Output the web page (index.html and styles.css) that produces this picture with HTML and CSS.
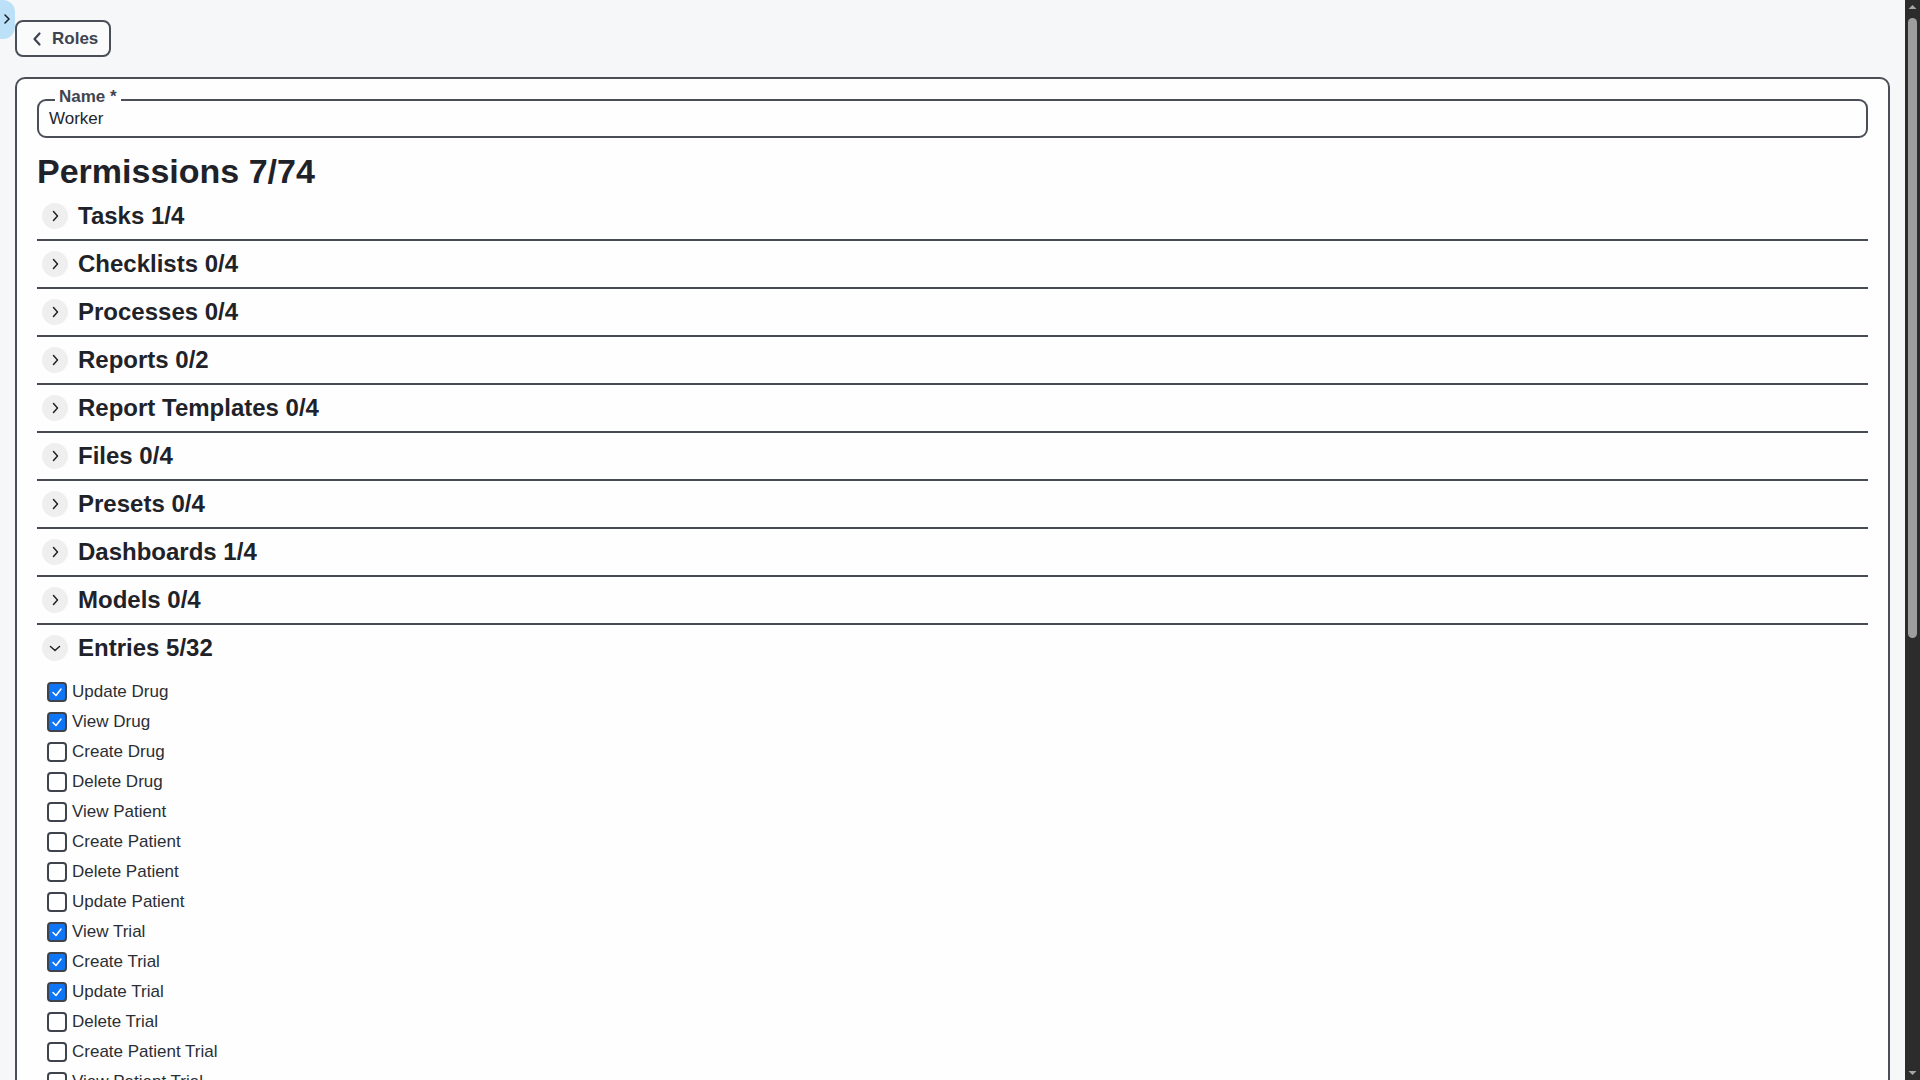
FILE: index.html
```html
<!DOCTYPE html>
<html lang="en">
<head>
<meta charset="utf-8">
<title>Role - Worker</title>
<link rel="stylesheet" href="styles.css">
</head>
<body>
<button class="sidebar-toggle" aria-label="Open sidebar">
  <svg width="8" height="12" viewBox="0 0 8 12"><polyline points="2,2 6,6 2,10" fill="none" stroke="#1f2329" stroke-width="1.6" stroke-linecap="round" stroke-linejoin="round"/></svg>
</button>
<div class="scrollbar" aria-hidden="true">
  <div class="sb-arrow sb-up"><svg width="15" height="15" viewBox="0 0 15 15"><polygon points="3.5,9 11.5,9 7.5,5" fill="#a6a6a6"/></svg></div>
  <div class="sb-track"><div class="sb-thumb"></div></div>
  <div class="sb-arrow sb-down"><svg width="15" height="15" viewBox="0 0 15 15"><polygon points="3.5,6 11.5,6 7.5,10" fill="#a6a6a6"/></svg></div>
</div>
<main class="page">
  <div class="top-bar">
    <button class="back-btn">
      <svg width="12" height="16" viewBox="0 0 12 16"><polyline points="8.5,2.5 3.5,8 8.5,13.5" fill="none" stroke="#3d4350" stroke-width="2.2" stroke-linecap="round" stroke-linejoin="round"/></svg>
      <span>Roles</span>
    </button>
  </div>
  <section class="card">
    <fieldset class="field">
      <legend>Name *</legend>
      <div class="field-value">Worker</div>
    </fieldset>
    <h1 class="title">Permissions 7/74</h1>
    <div class="groups">
      <div class="group"><div class="group-head"><span class="chev"><svg width="12" height="12" viewBox="0 0 12 12"><polyline points="4.5,1.5 8.5,6 4.5,10.5" fill="none" stroke="#1f2329" stroke-width="1.5" stroke-linecap="round" stroke-linejoin="round"/></svg></span><h2>Tasks 1/4</h2></div></div>
      <div class="group"><div class="group-head"><span class="chev"><svg width="12" height="12" viewBox="0 0 12 12"><polyline points="4.5,1.5 8.5,6 4.5,10.5" fill="none" stroke="#1f2329" stroke-width="1.5" stroke-linecap="round" stroke-linejoin="round"/></svg></span><h2>Checklists 0/4</h2></div></div>
      <div class="group"><div class="group-head"><span class="chev"><svg width="12" height="12" viewBox="0 0 12 12"><polyline points="4.5,1.5 8.5,6 4.5,10.5" fill="none" stroke="#1f2329" stroke-width="1.5" stroke-linecap="round" stroke-linejoin="round"/></svg></span><h2>Processes 0/4</h2></div></div>
      <div class="group"><div class="group-head"><span class="chev"><svg width="12" height="12" viewBox="0 0 12 12"><polyline points="4.5,1.5 8.5,6 4.5,10.5" fill="none" stroke="#1f2329" stroke-width="1.5" stroke-linecap="round" stroke-linejoin="round"/></svg></span><h2>Reports 0/2</h2></div></div>
      <div class="group"><div class="group-head"><span class="chev"><svg width="12" height="12" viewBox="0 0 12 12"><polyline points="4.5,1.5 8.5,6 4.5,10.5" fill="none" stroke="#1f2329" stroke-width="1.5" stroke-linecap="round" stroke-linejoin="round"/></svg></span><h2>Report Templates 0/4</h2></div></div>
      <div class="group"><div class="group-head"><span class="chev"><svg width="12" height="12" viewBox="0 0 12 12"><polyline points="4.5,1.5 8.5,6 4.5,10.5" fill="none" stroke="#1f2329" stroke-width="1.5" stroke-linecap="round" stroke-linejoin="round"/></svg></span><h2>Files 0/4</h2></div></div>
      <div class="group"><div class="group-head"><span class="chev"><svg width="12" height="12" viewBox="0 0 12 12"><polyline points="4.5,1.5 8.5,6 4.5,10.5" fill="none" stroke="#1f2329" stroke-width="1.5" stroke-linecap="round" stroke-linejoin="round"/></svg></span><h2>Presets 0/4</h2></div></div>
      <div class="group"><div class="group-head"><span class="chev"><svg width="12" height="12" viewBox="0 0 12 12"><polyline points="4.5,1.5 8.5,6 4.5,10.5" fill="none" stroke="#1f2329" stroke-width="1.5" stroke-linecap="round" stroke-linejoin="round"/></svg></span><h2>Dashboards 1/4</h2></div></div>
      <div class="group"><div class="group-head"><span class="chev"><svg width="12" height="12" viewBox="0 0 12 12"><polyline points="4.5,1.5 8.5,6 4.5,10.5" fill="none" stroke="#1f2329" stroke-width="1.5" stroke-linecap="round" stroke-linejoin="round"/></svg></span><h2>Models 0/4</h2></div></div>
      <div class="group open">
        <div class="group-head"><span class="chev"><svg width="12" height="12" viewBox="0 0 12 12"><polyline points="1.5,4.5 6,8.5 10.5,4.5" fill="none" stroke="#1f2329" stroke-width="1.5" stroke-linecap="round" stroke-linejoin="round"/></svg></span><h2>Entries 5/32</h2></div>
        <ul class="perm-list">
          <li><span class="box on"><svg width="16" height="16" viewBox="0 0 16 16"><polyline points="4,8.5 7,11.5 12,5" fill="none" stroke="#fff" stroke-width="1.5" stroke-linecap="round" stroke-linejoin="round"/></svg></span>Update Drug</li>
          <li><span class="box on"><svg width="16" height="16" viewBox="0 0 16 16"><polyline points="4,8.5 7,11.5 12,5" fill="none" stroke="#fff" stroke-width="1.5" stroke-linecap="round" stroke-linejoin="round"/></svg></span>View Drug</li>
          <li><span class="box"></span>Create Drug</li>
          <li><span class="box"></span>Delete Drug</li>
          <li><span class="box"></span>View Patient</li>
          <li><span class="box"></span>Create Patient</li>
          <li><span class="box"></span>Delete Patient</li>
          <li><span class="box"></span>Update Patient</li>
          <li><span class="box on"><svg width="16" height="16" viewBox="0 0 16 16"><polyline points="4,8.5 7,11.5 12,5" fill="none" stroke="#fff" stroke-width="1.5" stroke-linecap="round" stroke-linejoin="round"/></svg></span>View Trial</li>
          <li><span class="box on"><svg width="16" height="16" viewBox="0 0 16 16"><polyline points="4,8.5 7,11.5 12,5" fill="none" stroke="#fff" stroke-width="1.5" stroke-linecap="round" stroke-linejoin="round"/></svg></span>Create Trial</li>
          <li><span class="box on"><svg width="16" height="16" viewBox="0 0 16 16"><polyline points="4,8.5 7,11.5 12,5" fill="none" stroke="#fff" stroke-width="1.5" stroke-linecap="round" stroke-linejoin="round"/></svg></span>Update Trial</li>
          <li><span class="box"></span>Delete Trial</li>
          <li><span class="box"></span>Create Patient Trial</li>
          <li><span class="box"></span>View Patient Trial</li>
          <li><span class="box"></span>Update Patient Trial</li>
          <li><span class="box"></span>Delete Patient Trial</li>
          <li><span class="box"></span>View Site</li>
          <li><span class="box"></span>Create Site</li>
          <li><span class="box"></span>Update Site</li>
          <li><span class="box"></span>Delete Site</li>
          <li><span class="box"></span>View Sample</li>
          <li><span class="box"></span>Create Sample</li>
          <li><span class="box"></span>Update Sample</li>
          <li><span class="box"></span>Delete Sample</li>
          <li><span class="box"></span>View Visit</li>
          <li><span class="box"></span>Create Visit</li>
          <li><span class="box"></span>Update Visit</li>
          <li><span class="box"></span>Delete Visit</li>
          <li><span class="box"></span>View Adverse Event</li>
          <li><span class="box"></span>Create Adverse Event</li>
          <li><span class="box"></span>Update Adverse Event</li>
          <li><span class="box"></span>Delete Adverse Event</li>
        </ul>
      </div>
      <div class="group"><div class="group-head"><span class="chev"><svg width="12" height="12" viewBox="0 0 12 12"><polyline points="4.5,1.5 8.5,6 4.5,10.5" fill="none" stroke="#1f2329" stroke-width="1.5" stroke-linecap="round" stroke-linejoin="round"/></svg></span><h2>Users 0/4</h2></div></div>
      <div class="group"><div class="group-head"><span class="chev"><svg width="12" height="12" viewBox="0 0 12 12"><polyline points="4.5,1.5 8.5,6 4.5,10.5" fill="none" stroke="#1f2329" stroke-width="1.5" stroke-linecap="round" stroke-linejoin="round"/></svg></span><h2>Roles 0/4</h2></div></div>
    </div>
  </section>
</main>
</body>
</html>
```
FILE: styles.css
```css
* { box-sizing: border-box; }

html, body {
  margin: 0;
  padding: 0;
}

body {
  background: #f6f7f9;
  color: #22262c;
  font-family: "Liberation Sans", Arial, sans-serif;
  font-size: 17px;
}

/* browser scrollbar look-alike, overlaid on the right edge */
.scrollbar {
  position: fixed;
  top: 0;
  right: 0;
  width: 15px;
  height: 100vh;
  background: #2c2c2c;
  display: flex;
  flex-direction: column;
  z-index: 10;
}

.sb-arrow {
  height: 15px;
  flex-shrink: 0;
  display: flex;
}

.sb-track {
  flex: 1;
  padding: 3px 3px 0 3px;
}

.sb-thumb {
  height: 620px;
  width: 9px;
  border-radius: 5px;
  background: #9e9e9e;
}

.sidebar-toggle {
  position: fixed;
  top: 0;
  left: 0;
  width: 15px;
  height: 39px;
  padding: 0 0 2px 3px;
  border: none;
  border-radius: 0 12px 12px 0;
  background: #bde0f9;
  display: flex;
  align-items: center;
  justify-content: flex-start;
  cursor: pointer;
  z-index: 5;
}

.page {
  padding: 20px 30px 40px 15px;
}

.top-bar {
  display: flex;
}

.back-btn {
  display: flex;
  align-items: center;
  gap: 9px;
  height: 37px;
  width: 96px;
  padding: 0 0 0 14px;
  border: 2px solid #4a4f57;
  border-radius: 8px;
  background: #fbfbfc;
  color: #3d4350;
  font-family: inherit;
  font-size: 17px;
  font-weight: bold;
  cursor: pointer;
}

.card {
  margin-top: 20px;
  border: 2px solid #4a4f57;
  border-radius: 10px;
  background: #fefefe;
  padding: 9px 20px 40px 20px;
}

.field {
  margin: 0;
  padding: 0 10px 0 10px;
  border: 2px solid #4a4f57;
  border-radius: 9px;
  min-width: 0;
}

.field legend {
  margin-left: 6px;
  padding: 0 4px 6px 4px;
  font-weight: bold;
  font-size: 17px;
  line-height: 18px;
  color: #3e4551;
}

.field-value {
  height: 24px;
  line-height: 14px;
  font-size: 17px;
  color: #22262c;
}

.title {
  margin: 13px 0 2px 0;
  font-size: 34px;
  line-height: 40px;
  font-weight: bold;
  color: #1f2329;
}

.groups {
  display: flex;
  flex-direction: column;
}

.group-head {
  display: flex;
  align-items: center;
  gap: 10px;
  height: 48px;
  padding-left: 5px;
  border-bottom: 2px solid #464a52;
}

.group.open .group-head {
  border-bottom: none;
  height: 46px;
}

.chev {
  width: 26px;
  height: 26px;
  border-radius: 50%;
  background: #efefef;
  display: flex;
  align-items: center;
  justify-content: center;
  flex-shrink: 0;
}

.group-head h2 {
  margin: 0;
  font-size: 24px;
  line-height: 28px;
  font-weight: bold;
  color: #1f2329;
}

.perm-list {
  list-style: none;
  margin: 0 0 8px 0;
  padding: 6px 0 0 10px;
}

.perm-list li {
  display: flex;
  align-items: center;
  gap: 5px;
  height: 30px;
  font-size: 17px;
  color: #2a2e35;
}

.box {
  width: 20px;
  height: 20px;
  border: 2px solid #3f444c;
  border-radius: 4px;
  background: #fff;
  display: flex;
  align-items: center;
  justify-content: center;
  flex-shrink: 0;
}

.box.on {
  background: #0f75f7;
}
```
